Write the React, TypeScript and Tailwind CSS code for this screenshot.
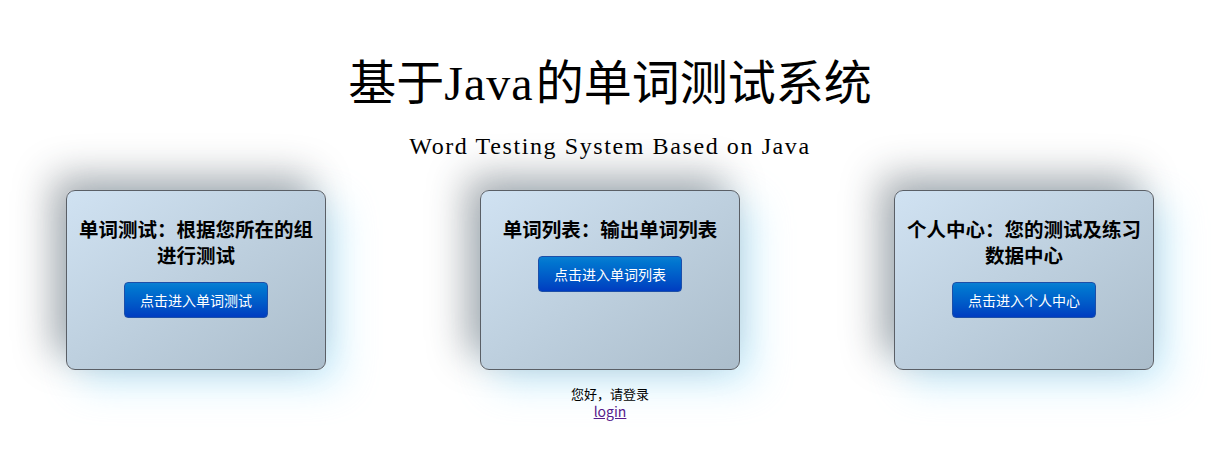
import React from "react";

const cjk = "font-['Noto_Sans_CJK_SC',sans-serif]";

function Card({ title, btn }: { title: string; btn: string }) {
  return (
    <div className="w-[260px] h-[180px] rounded-[9px] border border-[#5a5f66] bg-gradient-to-br from-[#d0e2f2] to-[#abbdcb] shadow-[-14px_-14px_38px_rgba(40,50,60,0.4),14px_14px_38px_rgba(150,225,255,0.45)] flex flex-col items-center pt-[25px] px-[10px]">
      <h2 className={`${cjk} text-[19.5px] leading-[26px] font-bold text-black text-center`}>{title}</h2>
      <button className={`${cjk} mt-[14px] h-[36px] px-[15px] rounded-[4px] border border-[#1d4fa8] bg-gradient-to-b from-[#0a7fd2] to-[#003cc0] text-white text-[14px] leading-[20px]`}>
        {btn}
      </button>
    </div>
  );
}

export default function App() {
  return (
    <div className="w-[1220px] bg-white min-h-[465px]">
      <h1 className={`text-center pt-[48px] text-[48px] leading-[62px] text-black ${cjk}`}>
        基于<span className="font-['Liberation_Serif',serif] tracking-[1px] mr-[2px]">Java</span>的单词测试系统
      </h1>
      <p className="text-center mt-[17px] font-['Liberation_Serif',serif] text-[24px] leading-[28px] tracking-[1.6px] text-black">
        Word Testing System Based on Java
      </p>
      <div className="flex justify-between px-[66px] mt-[30px]">
        <Card title="单词测试：根据您所在的组进行测试" btn="点击进入单词测试" />
        <Card title="单词列表：输出单词列表" btn="点击进入单词列表" />
        <Card title="个人中心：您的测试及练习数据中心" btn="点击进入个人中心" />
      </div>
      <div className={`${cjk} text-center mt-[15px] text-[13px] text-black`}>
        <div className="leading-[17px]">您好，请登录</div>
        <div className="leading-[18px]">
          <a href="#" className="underline text-[#551a8b] text-[14px]">login</a>
        </div>
      </div>
    </div>
  );
}
